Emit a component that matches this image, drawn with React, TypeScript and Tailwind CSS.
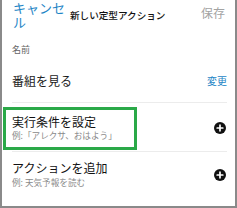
import React from "react";

function PlusIcon() {
  return (
    <svg width="12" height="12" viewBox="0 0 12 12" className="shrink-0">
      <circle cx="6" cy="6" r="6" fill="#111111" />
      <path d="M6 3.2V8.8M3.2 6H8.8" stroke="#ffffff" strokeWidth="1.7" strokeLinecap="round" />
    </svg>
  );
}

export default function App() {
  return (
    <div
      className="relative w-[237px] h-[208px] overflow-hidden bg-white border-x-2 border-b-2 border-[#8a8a8a]"
      style={{ fontFamily: '"Noto Sans CJK JP", "Noto Sans", sans-serif' }}
    >
      {/* header */}
      <div className="flex items-start h-[42px]">
        <div className="ml-[11px] mt-[1px] w-[54px] text-[13px] leading-[13.5px] text-[#1f86c6]">キャンセル</div>
        <div className="ml-[3px] mt-[9px] text-[9.6px] leading-[12px] font-medium text-[#111]">新しい定型アクション</div>
        <div className="ml-auto mr-[10px] mt-[6px] text-[12px] leading-[14px] text-[#a3a3a3]">保存</div>
      </div>
      {/* name label */}
      <div className="mt-[2px] pl-[10px] text-[9px] leading-[12px] text-[#666]">名前</div>
      {/* row 1 */}
      <div className="mx-[8px] ml-[10px] h-[47px] border-b border-[#ececec] flex items-start pt-[17px]">
        <div className="text-[12px] leading-[16px] text-[#1c1c1c]">番組を見る</div>
        <div className="ml-auto mt-[2px] text-[10px] leading-[12px] text-[#1f86c6]">変更</div>
      </div>
      {/* row 2 */}
      <div className="mx-[8px] ml-[10px] h-[49px] border-b border-[#ececec] pt-[11px]">
        <div className="flex items-center">
          <div>
            <div className="text-[12px] leading-[15px] text-[#111]">実行条件を設定</div>
            <div className="text-[8.6px] leading-[12px] text-[#8a8a8a]">例:「アレクサ、おはよう」</div>
          </div>
          <div className="ml-auto mr-[1px]">
            <PlusIcon />
          </div>
        </div>
      </div>
      {/* row 3 */}
      <div className="mx-[8px] ml-[10px] pt-[8px]">
        <div className="flex items-center">
          <div>
            <div className="text-[12px] leading-[15px] text-[#111]">アクションを追加</div>
            <div className="mt-[1px] text-[8.6px] leading-[12px] text-[#8a8a8a]">例: 天気予報を読む</div>
          </div>
          <div className="ml-auto mr-[1px] mt-[2px]">
            <PlusIcon />
          </div>
        </div>
      </div>
      {/* highlight box */}
      <div className="absolute left-[1px] top-[107px] w-[134px] h-[43px] border-[3px] border-[#2aa948]" />
    </div>
  );
}
